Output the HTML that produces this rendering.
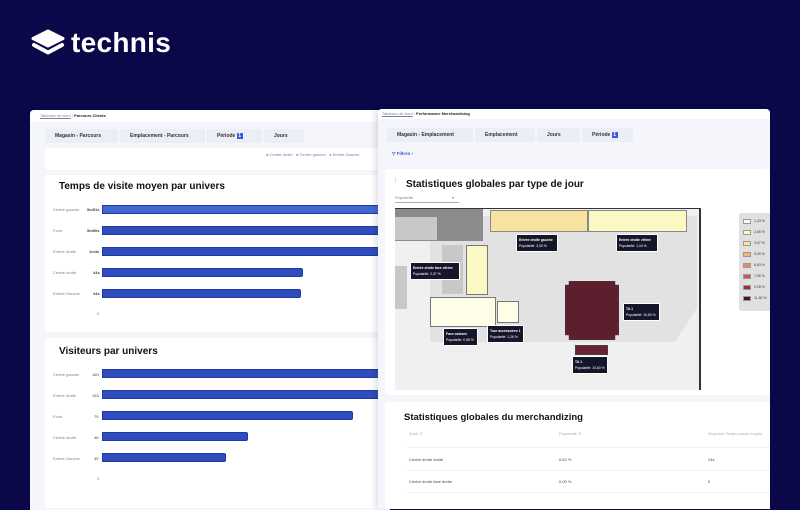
<!DOCTYPE html>
<html><head><meta charset="utf-8"><style>
*{margin:0;padding:0;box-sizing:border-box}
body{width:800px;height:500px;overflow:hidden;background:#0a0849;font-family:"Liberation Sans",sans-serif;position:relative}
.a{position:absolute}
.t{font-size:4px;color:#7a7fa0;white-space:nowrap}
.bar{position:absolute;height:9px;background:#2f4dbf;border-radius:0 2px 2px 0;border:1px solid #1e3aa8}
.btn{position:absolute;height:14px;background:#eceef6;border-radius:2px;font-size:5px;font-weight:bold;color:#333;line-height:14px;padding-left:10px;white-space:nowrap}
.tip{position:absolute;background:#15162a;color:#fff;font-size:3.4px;padding:2px 2px;border:1px solid #fff;line-height:6px;white-space:nowrap}
.tip b{display:block}
.lg{position:absolute;left:4px;width:8px;height:5px;border:0.5px solid #999}
.lt{position:absolute;left:15px;font-size:3.5px;color:#333}
</style></head><body>
<!-- logo -->
<svg class="a" style="left:30px;top:29px" width="36" height="30" viewBox="0 0 36 30">
<path d="M18 2 L33 9.5 L18 17 L3 9.5 Z" fill="#fff" stroke="#fff" stroke-width="3" stroke-linejoin="round"/>
<path d="M4 16 L18 23.5 L32 16" fill="none" stroke="#fff" stroke-width="4" stroke-linecap="round" stroke-linejoin="round"/>
</svg>
<div class="a" style="left:71px;top:27px;color:#fff;font-size:28px;font-weight:bold;letter-spacing:0.3px">technis</div>

<!-- left panel -->
<div class="a" style="left:30px;top:110px;width:360px;height:400px;background:#f5f6fb;border-radius:4px 0 0 0;overflow:hidden">
 <div class="a" style="left:0;top:0;width:360px;height:12px;background:#fff"></div>
 <div class="a t" style="left:10px;top:3px;font-size:4px"><span style="text-decoration:underline">Tableaux de bord</span> / <b style="color:#222">Parcours Clients</b></div>
 <div class="btn" style="left:15px;top:19px;width:73px">Magasin - Parcours</div>
 <div class="btn" style="left:90px;top:19px;width:85px">Emplacement - Parcours</div>
 <div class="btn" style="left:177px;top:19px;width:55px">Période <span style="background:#3b5bdb;color:#fff;padding:0 1.5px">1</span></div>
 <div class="btn" style="left:234px;top:19px;width:40px">Jours</div>
 <div class="a" style="left:15px;top:38px;width:345px;height:22px;background:#fff;border-radius:3px"></div>
 <div class="a t" style="left:236px;top:42px">● Centre droite &nbsp; ● Centre gauche &nbsp; ● Entrée Gauche</div>
 <div class="a" style="left:15px;top:65px;width:345px;height:157px;background:#fff;border-radius:3px"></div>
 <div class="a" style="left:29px;top:71px;font-size:10px;font-weight:bold;color:#111">Temps de visite moyen par univers</div>
 <div class="a t" style="left:23px;top:97px">Centre gauche</div><div class="a t" style="left:57px;top:97px;font-weight:bold;color:#444">5m51s</div><div class="bar" style="left:72px;top:95px;width:300px;background:#4566d0"></div>
 <div class="a t" style="left:23px;top:118px">Fond</div><div class="a t" style="left:57px;top:118px;font-weight:bold;color:#444">5m50s</div><div class="bar" style="left:72px;top:116px;width:300px"></div>
 <div class="a t" style="left:23px;top:139px">Entrée droite</div><div class="a t" style="left:59px;top:139px;font-weight:bold;color:#444">1m4s</div><div class="bar" style="left:72px;top:137px;width:300px"></div>
 <div class="a t" style="left:23px;top:160px">Centre droite</div><div class="a t" style="left:63px;top:160px;font-weight:bold;color:#444">44s</div><div class="bar" style="left:72px;top:158px;width:201px"></div>
 <div class="a t" style="left:23px;top:181px">Entrée Gauche</div><div class="a t" style="left:63px;top:181px;font-weight:bold;color:#444">44s</div><div class="bar" style="left:72px;top:179px;width:199px"></div>
 <div class="a t" style="left:67px;top:201px">0</div>
 <div class="a" style="left:15px;top:228px;width:345px;height:170px;background:#fff;border-radius:3px"></div>
 <div class="a" style="left:29px;top:236px;font-size:10px;font-weight:bold;color:#111">Visiteurs par univers</div>
 <div class="a t" style="left:23px;top:262px">Centre gauche</div><div class="a t" style="left:62px;top:262px;color:#444">160</div><div class="bar" style="left:72px;top:259px;width:300px"></div>
 <div class="a t" style="left:23px;top:283px">Entrée droite</div><div class="a t" style="left:62px;top:283px;color:#444">153</div><div class="bar" style="left:72px;top:280px;width:300px"></div>
 <div class="a t" style="left:23px;top:304px">Fond</div><div class="a t" style="left:64px;top:304px;color:#444">79</div><div class="bar" style="left:72px;top:301px;width:251px"></div>
 <div class="a t" style="left:23px;top:325px">Centre droite</div><div class="a t" style="left:64px;top:325px;color:#444">46</div><div class="bar" style="left:72px;top:322px;width:146px"></div>
 <div class="a t" style="left:23px;top:346px">Entrée Gauche</div><div class="a t" style="left:64px;top:346px;color:#444">39</div><div class="bar" style="left:72px;top:343px;width:124px"></div>
 <div class="a t" style="left:67px;top:366px">0</div>
</div>

<!-- right panel -->
<div class="a" style="left:378px;top:109px;width:392px;height:400px;background:#f5f6fb;border-radius:4px 4px 0 0;overflow:hidden;box-shadow:-3px 0 6px rgba(0,0,0,0.12)">
 <div class="a" style="left:0;top:0;width:392px;height:10px;background:#fff"></div>
 <div class="a t" style="left:4px;top:2px"><span style="text-decoration:underline">Tableaux de bord</span> / <b style="color:#222">Performance Merchandising</b></div>
 <div class="btn" style="left:9px;top:19px;width:86px">Magasin - Emplacement</div>
 <div class="btn" style="left:97px;top:19px;width:60px">Emplacement</div>
 <div class="btn" style="left:159px;top:19px;width:43px">Jours</div>
 <div class="btn" style="left:204px;top:19px;width:51px">Période <span style="background:#3b5bdb;color:#fff;padding:0 1.5px">1</span></div>
 <div class="a" style="left:14px;top:42px;font-size:4.5px;color:#3b5bdb;font-weight:bold">▽ Filtres ›</div>
 <div class="a" style="left:7px;top:60px;width:385px;height:226px;background:#fff;border-radius:3px"></div>
 <div class="a" style="left:15px;top:69px;font-size:5px;color:#333">⋮</div>
 <div class="a" style="left:28px;top:70px;font-size:10px;font-weight:bold;color:#111">Statistiques globales par type de jour</div>
 <div class="a t" style="left:17px;top:86px">Popularité</div><div class="a t" style="left:74px;top:86px">▾</div>
 <div class="a" style="left:17px;top:93px;width:64px;height:1px;background:#aaa"></div>
 <!-- map -->
 <div class="a" style="left:17px;top:99px;width:306px;height:182px;background:#f0f0f0;overflow:hidden">
  <div class="a" style="left:0;top:0;width:306px;height:1px;background:#333"></div>
  <div class="a" style="left:304px;top:0;width:2px;height:182px;background:#333"></div>
  <svg class="a" style="left:0;top:0" width="306" height="182"><polygon points="35,8 302,8 302,100 280,134 35,134" fill="#e2e2e2"/></svg>
  <div class="a" style="left:0;top:1px;width:88px;height:32px;background:#8b8b8b"></div>
  <div class="a" style="left:0;top:9px;width:42px;height:23px;background:#c8c8c8"></div>
  <div class="a" style="left:95px;top:2px;width:98px;height:22px;background:#f7e2a0;border:1px solid #888"></div>
  <div class="a" style="left:193px;top:2px;width:99px;height:22px;background:#fbf8c4;border:1px solid #888"></div>
  <div class="a" style="left:47px;top:37px;width:21px;height:49px;background:#c8c8c8"></div>
  <div class="a" style="left:71px;top:37px;width:22px;height:50px;background:#fbf8c4;border:1px solid #777"></div>
  <div class="a" style="left:0;top:58px;width:12px;height:43px;background:#c8c8c8"></div>
  <div class="a" style="left:35px;top:89px;width:66px;height:30px;background:#fefee8;border:1px solid #777"></div>
  <div class="a" style="left:102px;top:93px;width:22px;height:22px;background:#fefee8;border:1px solid #777"></div>
  <svg class="a" style="left:170px;top:73px" width="54" height="59"><polygon points="4,0 50,0 50,4 54,4 54,54 50,54 50,59 4,59 4,54 0,54 0,4 4,4" fill="#5c1f2e" stroke="#444" stroke-width="0.5"/></svg>
  <div class="a" style="left:180px;top:137px;width:33px;height:10px;background:#6a2232;border:1px solid #444"></div>
  <div class="tip" style="left:121px;top:26px;width:42px"><b>Entrée droite gauche</b>Popularité: 3,00 %</div>
  <div class="tip" style="left:221px;top:26px;width:42px"><b>Entrée droite vitrine</b>Popularité: 1,04 %</div>
  <div class="tip" style="left:15px;top:54px;width:50px"><b>Entrée droite face vitrine</b>Popularité: 2,37 %</div>
  <div class="tip" style="left:48px;top:120px;width:35px"><b>Face caisses</b>Popularité: 0,98 %</div>
  <div class="tip" style="left:92px;top:117px;width:37px"><b>Tour accessoires 1</b>Popularité: 1,26 %</div>
  <div class="tip" style="left:228px;top:95px;width:37px"><b>TA 1</b>Popularité: 10,60 %</div>
  <div class="tip" style="left:177px;top:148px;width:36px"><b>TA 1</b>Popularité: 10,60 %</div>
 </div>
 <div class="a" style="left:361px;top:104px;width:40px;height:98px;background:#e0e0e0;border-radius:3px">
  <div class="lg" style="top:6px;background:#fefee8"></div><div class="lt" style="top:6px">1,33 %</div>
  <div class="lg" style="top:17px;background:#fbf8c4"></div><div class="lt" style="top:17px">2,65 %</div>
  <div class="lg" style="top:28px;background:#f7e2a0"></div><div class="lt" style="top:28px">3,97 %</div>
  <div class="lg" style="top:39px;background:#f2b46e"></div><div class="lt" style="top:39px">5,30 %</div>
  <div class="lg" style="top:50px;background:#ea8a5c"></div><div class="lt" style="top:50px">6,63 %</div>
  <div class="lg" style="top:61px;background:#d9534a"></div><div class="lt" style="top:61px">7,96 %</div>
  <div class="lg" style="top:72px;background:#9c2f33"></div><div class="lt" style="top:72px">9,28 %</div>
  <div class="lg" style="top:83px;background:#4a1424"></div><div class="lt" style="top:83px">11,60 %</div>
 </div>
 <div class="a" style="left:7px;top:293px;width:385px;height:120px;background:#fff;border-radius:3px"></div>
 <div class="a" style="left:26px;top:303px;font-size:9.5px;font-weight:bold;color:#111">Statistiques globales du merchandizing</div>
 <div class="a t" style="left:31px;top:322px;color:#aab">Zone ⇕</div>
 <div class="a t" style="left:181px;top:322px;color:#aab">Popularité ⇕</div>
 <div class="a t" style="left:330px;top:322px;color:#aab">Moyenne Temps passé moyen</div>
 <div class="a" style="left:29px;top:338px;width:363px;height:1px;background:#eef"></div>
 <div class="a t" style="left:31px;top:348px;color:#445">Centre droite droite</div>
 <div class="a t" style="left:181px;top:348px;color:#445">0.62 %</div>
 <div class="a t" style="left:330px;top:348px;color:#445">24s</div>
 <div class="a" style="left:29px;top:361px;width:363px;height:1px;background:#eef"></div>
 <div class="a t" style="left:31px;top:370px;color:#445">Centre droite face droite</div>
 <div class="a t" style="left:181px;top:370px;color:#445">0.00 %</div>
 <div class="a t" style="left:330px;top:370px;color:#445">0</div>
 <div class="a" style="left:29px;top:383px;width:363px;height:1px;background:#eef"></div>
</div>
</body></html>
